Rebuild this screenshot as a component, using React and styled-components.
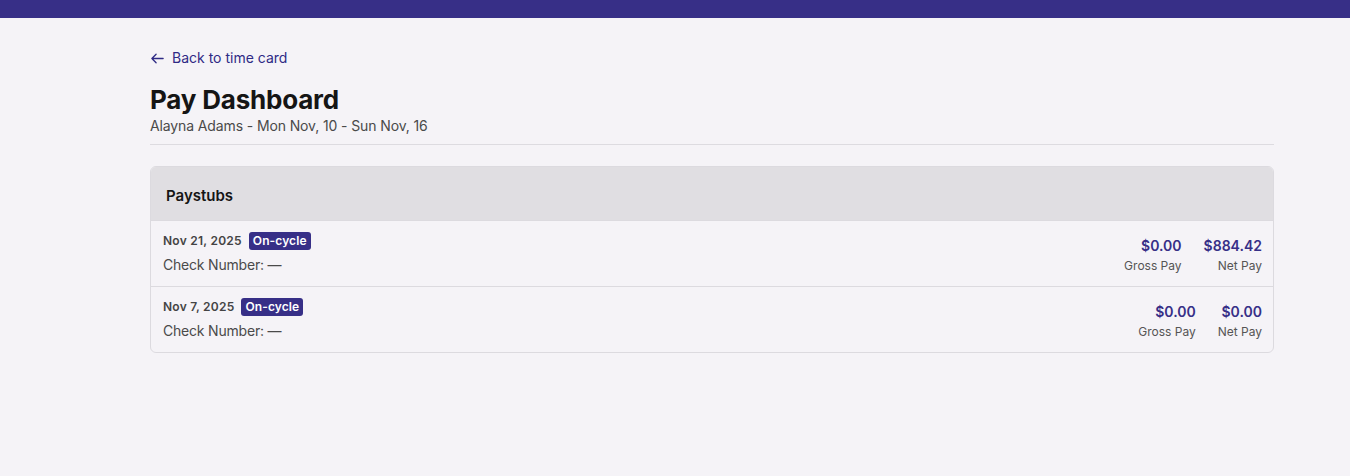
import React from 'react'
import styled, { createGlobalStyle } from 'styled-components'

const GlobalStyle = createGlobalStyle`
  body {
    margin: 0;
    background: #f5f3f7;
    font-family: Inter, "Liberation Sans", sans-serif;
    color: #1a1a1a;
  }
`

const TopBar = styled.div`
  height: 18px;
  background: #372f87;
`

const Page = styled.main`
  padding: 30px 76px 0 150px;
`

const BackLink = styled.a`
  display: inline-flex;
  align-items: center;
  gap: 7px;
  font-size: 14px;
  line-height: 20px;
  color: #2f2a85;
  text-decoration: none;
  cursor: pointer;

  svg {
    width: 15px;
    height: 15px;
  }
`

const Title = styled.h1`
  margin: 15px 0 0;
  font-size: 26px;
  line-height: 30px;
  font-weight: 700;
  letter-spacing: -0.2px;
  color: #151515;
`

const Subtitle = styled.p`
  margin: 1px 0 0;
  font-size: 14px;
  line-height: 20px;
  letter-spacing: -0.12px;
  color: #4a4a4a;
`

const Divider = styled.hr`
  margin: 8px 0 21px;
  border: 0;
  border-top: 1px solid #dddbe0;
`

const Card = styled.section`
  border: 1px solid #dcdadf;
  border-radius: 6px;
  overflow: hidden;
`

const CardHeader = styled.div`
  box-sizing: border-box;
  background: #e0dee2;
  height: 53px;
  display: flex;
  align-items: center;
  padding: 4px 15px 0;
  font-size: 15px;
  font-weight: 600;
  color: #151515;
`

const Row = styled.div`
  display: flex;
  justify-content: space-between;
  align-items: center;
  height: 65px;
  padding: 0 11px 0 12px;
  border-top: 1px solid #dcdadf;
`

const Meta = styled.div`
  display: flex;
  flex-direction: column;
  gap: 5px;
`

const DateLine = styled.div`
  display: flex;
  align-items: center;
  gap: 7px;
  font-size: 12px;
  font-weight: 600;
  letter-spacing: 0.25px;
  color: #444;
`

const Badge = styled.span`
  background: #372f87;
  color: #fff;
  border-radius: 3px;
  padding: 1px 4px;
  font-size: 12px;
  line-height: 16px;
  font-weight: 600;
  letter-spacing: 0.1px;
`

const Check = styled.div`
  font-size: 14px;
  line-height: 20px;
  letter-spacing: -0.2px;
  color: #4a4a4a;
`

const Amounts = styled.div`
  display: flex;
  gap: 22px;
  padding-top: 3px;
`

const Amount = styled.div`
  display: flex;
  flex-direction: column;
  align-items: flex-end;
`

const Value = styled.span`
  font-size: 14px;
  line-height: 20px;
  font-weight: 600;
  color: #372f87;
`

const Label = styled.span`
  margin-top: 2px;
  font-size: 12px;
  line-height: 16px;
  color: #555;
`

const paystubs = [
  { date: 'Nov 21, 2025', gross: '$0.00', net: '$884.42' },
  { date: 'Nov 7, 2025', gross: '$0.00', net: '$0.00' },
]

const ArrowLeft = () => (
  <svg viewBox="0 0 16 16" fill="none" stroke="currentColor" strokeWidth="1.4" strokeLinecap="round" strokeLinejoin="round">
    <path d="M14 8H2M6.5 3.5L2 8l4.5 4.5" />
  </svg>
)

const App = () => (
  <>
    <GlobalStyle />
    <TopBar />
    <Page>
      <BackLink>
        <ArrowLeft />
        Back to time card
      </BackLink>
      <Title>Pay Dashboard</Title>
      <Subtitle>Alayna Adams - Mon Nov, 10 - Sun Nov, 16</Subtitle>
      <Divider />
      <Card>
        <CardHeader>Paystubs</CardHeader>
        {paystubs.map(stub => (
          <Row key={stub.date}>
            <Meta>
              <DateLine>
                {stub.date}
                <Badge>On-cycle</Badge>
              </DateLine>
              <Check>Check Number: —</Check>
            </Meta>
            <Amounts>
              <Amount>
                <Value>{stub.gross}</Value>
                <Label>Gross Pay</Label>
              </Amount>
              <Amount>
                <Value>{stub.net}</Value>
                <Label>Net Pay</Label>
              </Amount>
            </Amounts>
          </Row>
        ))}
      </Card>
    </Page>
  </>
)

export default App
